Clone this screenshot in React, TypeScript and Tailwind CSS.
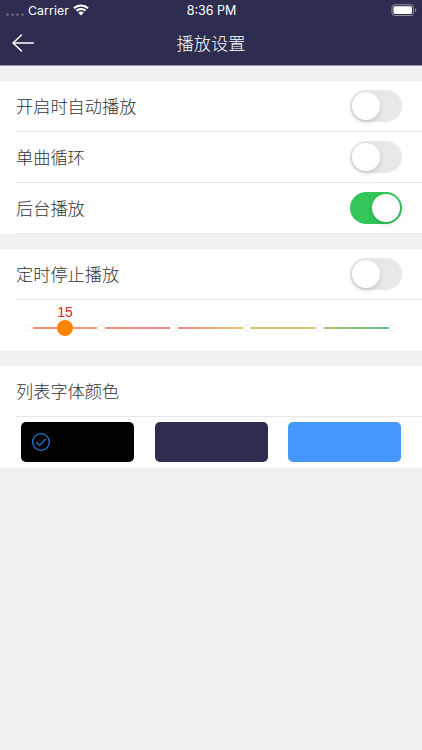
import React, { useState } from 'react';

const SWATCHES = [
  { id: 'black', className: 'bg-black' },
  { id: 'navy', className: 'bg-[#2c2d4f]' },
  { id: 'blue', className: 'bg-[#4697fb]' },
];

const SEGMENTS = [
  'bg-[linear-gradient(90deg,#ee7452,#f08457)]',
  'bg-[linear-gradient(90deg,#ee7a5c,#e2716a)]',
  'bg-[linear-gradient(90deg,#dd7062,#e6b95a)]',
  'bg-[linear-gradient(90deg,#cbb04c,#c9bf4e)]',
  'bg-[linear-gradient(90deg,#a3ac4c,#3cb469)]',
];

function StatusBar() {
  return (
    <div className="flex h-5 items-center justify-between pl-1.5 pr-[5px] font-['Inter',sans-serif] text-[12.5px] font-medium leading-5 text-white">
      <div className="flex w-[160px] items-center">
        <div className="mt-2 flex gap-[2px]">
          {[0, 1, 2, 3].map((i) => (
            <span key={i} className="h-[3px] w-[3px] rounded-full bg-[#5f607a]" />
          ))}
        </div>
        <span className="ml-1 w-[42px] pt-px text-[12.3px] font-normal tracking-[0.1px]">Carrier</span>
        <svg className="ml-[3px]" width="16" height="12" viewBox="0 0 16 12" fill="white">
          <path d="M8 .4C5 .4 2.300 1.500.300 3.500l1.500 1.500A8.800 8.800 0 0 1 8 2.500 8.800 8.800 0 0 1 14.200 5l1.500-1.500A11 11 0 0 0 8 .4Z" />
          <path d="M8 4a7.300 7.300 0 0 0-5.200 2.100l1.500 1.500A5.300 5.300 0 0 1 8 6.100c1.400 0 2.700.5 3.700 1.500l1.500-1.500A7.300 7.300 0 0 0 8 4Z" />
          <path d="M8 7.600c-1 0-2 .4-2.700 1.100L8 11.500l2.700-2.800A3.800 3.800 0 0 0 8 7.600Z" />
        </svg>
      </div>
      <span className="mt-px whitespace-nowrap text-[12.5px] font-normal">8:36 PM</span>
      <div className="flex w-[160px] justify-end">
        <svg width="26" height="12" viewBox="0 0 26 12" fill="none">
          <rect x="1" y="0.800" width="21.500" height="10.700" rx="2.600" stroke="#92939f" />
          <rect x="2.500" y="2.300" width="18.500" height="7.700" rx="1.400" fill="white" />
          <path d="M24 4.300c.8.300 1.300 1 1.300 1.800s-.5 1.500-1.300 1.800Z" fill="#92939f" />
        </svg>
      </div>
    </div>
  );
}

function Toggle({ on, onChange }: { on: boolean; onChange: () => void }) {
  return (
    <button
      role="switch"
      aria-checked={on}
      onClick={onChange}
      className={`flex h-8 w-[52px] items-center rounded-full p-0.5 ${on ? 'justify-end bg-[#33c659]' : 'justify-start bg-[#e8e8ea]'}`}
    >
      <span className="h-7 w-7 rounded-full bg-white shadow-[0_2px_5px_rgba(0,0,0,0.16)]" />
    </button>
  );
}

function Row({ label, children }: { label: string; children?: React.ReactNode }) {
  return (
    <div className="ml-4 flex h-[51px] items-center justify-between border-b border-[#e7e7e8] pr-5">
      <span className="text-[17.2px] leading-6">{label}</span>
      {children}
    </div>
  );
}

function Stop() {
  return <span className="h-2 w-2 shrink-0 rounded-full border border-[#f1f1f6] bg-white" />;
}

function TimerSlider() {
  return (
    <div className="relative h-[51px] pl-[24.5px] pr-[25px] pt-[23.5px]">
      <div className="flex items-center">
        <Stop />
        {SEGMENTS.map((segment) => (
          <React.Fragment key={segment}>
            <span className={`h-[2px] flex-1 opacity-80 ${segment}`} />
            <Stop />
          </React.Fragment>
        ))}
      </div>
      {/* Thumb and its value sit over the track */}
      <div className="absolute left-[57px] top-[4px] flex w-4 flex-col items-center">
        <span className="font-['Liberation_Sans',sans-serif] text-[14px] font-normal leading-4 text-[#e02329]">15</span>
        <span className="h-4 w-4 rounded-full bg-[#ff8202]" />
      </div>
    </div>
  );
}

export default function App() {
  const [autoPlay, setAutoPlay] = useState(false);
  const [loop, setLoop] = useState(false);
  const [background, setBackground] = useState(true);
  const [timer, setTimer] = useState(false);
  const [color, setColor] = useState('black');

  return (
    <div className="h-[750px] w-[422px] overflow-hidden bg-[#f1f1f1] font-['Noto_Sans_CJK_SC',sans-serif] font-light text-[#333]">
      <header className="h-[66px] border-b border-[#9595a6] bg-[#2c2d4f]">
        <StatusBar />
        <div className="flex h-[45px] items-center px-3">
          <button className="w-12" aria-label="返回">
            <svg width="22" height="18" viewBox="0 0 22 18" fill="none" stroke="white" strokeWidth="1.500" strokeLinecap="round" strokeLinejoin="round">
              <path d="M9.500 1 1 9l8.500 8M1 9h20.500" />
            </svg>
          </button>
          <h1 className="flex-1 text-center text-[17.2px] leading-6 text-white">播放设置</h1>
          <span className="w-12" />
        </div>
      </header>

      <section className="mt-[15px] bg-white">
        <Row label="开启时自动播放">
          <Toggle on={autoPlay} onChange={() => setAutoPlay(!autoPlay)} />
        </Row>
        <Row label="单曲循环">
          <Toggle on={loop} onChange={() => setLoop(!loop)} />
        </Row>
        <Row label="后台播放">
          <Toggle on={background} onChange={() => setBackground(!background)} />
        </Row>
      </section>

      <section className="mt-[15px] bg-white">
        <Row label="定时停止播放">
          <Toggle on={timer} onChange={() => setTimer(!timer)} />
        </Row>
        <TimerSlider />
      </section>

      <section className="mt-[15px] bg-white">
        <Row label="列表字体颜色" />
        <div className="flex h-[51px] justify-between px-[21px] pt-[5px]">
          {SWATCHES.map((swatch) => (
            <button
              key={swatch.id}
              onClick={() => setColor(swatch.id)}
              className={`flex h-10 w-[113px] items-center rounded-[5px] pl-[11px] ${swatch.className}`}
            >
              {color === swatch.id && (
                <svg width="18" height="18" viewBox="0 0 18 18" fill="none" stroke="#257bd6" strokeWidth="1.300">
                  <circle cx="9" cy="9" r="8.300" />
                  <path d="m4.300 9 3.400 3.400 6-6.500" />
                </svg>
              )}
            </button>
          ))}
        </div>
      </section>
    </div>
  );
}
